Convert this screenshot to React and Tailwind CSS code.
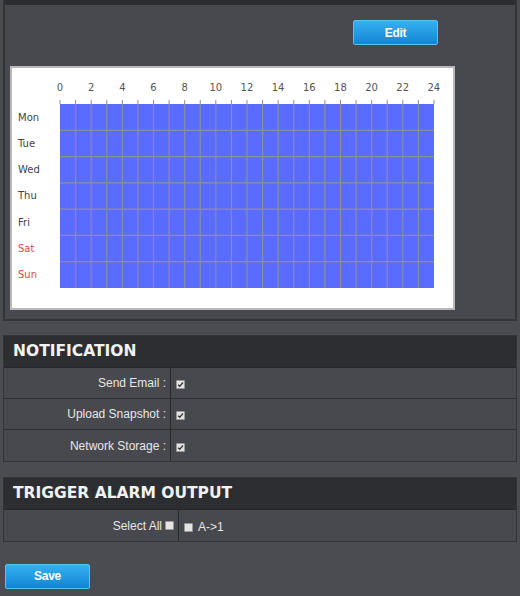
import React from "react";

const days = [
  { name: "Mon", red: false },
  { name: "Tue", red: false },
  { name: "Wed", red: false },
  { name: "Thu", red: false },
  { name: "Fri", red: false },
  { name: "Sat", red: true },
  { name: "Sun", red: true },
];

const hourLabels = [0, 2, 4, 6, 8, 10, 12, 14, 16, 18, 20, 22, 24];

const GRID_W = 374;
const GRID_H = 184;
const TICK_H = 4;

function CheckBox({ checked }) {
  return (
    <span className="inline-flex h-[9px] w-[9px] items-center justify-center rounded-[1px] border border-[#9a9a9a] bg-[#e4e4e4]">
      {checked && (
        <svg viewBox="0 0 8 8" className="h-[7px] w-[7px]">
          <path d="M1.2 4.2 L3.2 6 L6.8 1.8" fill="none" stroke="#3a3a3a" strokeWidth="1.6" />
        </svg>
      )}
    </span>
  );
}

function BlueButton({ children }) {
  return (
    <button className="h-[25px] w-[85px] rounded-[2px] border border-[#5cc0f2] bg-gradient-to-b from-[#35b0f2] to-[#0f86d4] text-[12px] font-bold tracking-tight text-white [font-family:'Liberation_Sans',sans-serif]">
      {children}
    </button>
  );
}

// the week grid is a drawing: blue fill, hour/day lines and tick marks on top
function WeekGrid() {
  const colW = GRID_W / 24;
  const rowH = GRID_H / 7;
  return (
    <svg width={GRID_W + 2} height={GRID_H + TICK_H} className="block">
      <rect x="1" y={TICK_H} width={GRID_W} height={GRID_H} fill="#5a6cfd" />
      {Array.from({ length: 25 }).map((_, i) => (
        <line
          key={"t" + i}
          x1={1 + i * colW}
          x2={1 + i * colW}
          y1="0"
          y2={TICK_H}
          stroke="#8a8a8a"
          strokeWidth="1"
        />
      ))}
      {Array.from({ length: 23 }).map((_, i) => (
        <line
          key={"v" + i}
          x1={1 + (i + 1) * colW}
          x2={1 + (i + 1) * colW}
          y1={TICK_H}
          y2={TICK_H + GRID_H}
          stroke="#8f8f98"
          strokeWidth="1.1"
        />
      ))}
      {Array.from({ length: 6 }).map((_, i) => (
        <line
          key={"h" + i}
          x1="1"
          x2={1 + GRID_W}
          y1={TICK_H + (i + 1) * rowH}
          y2={TICK_H + (i + 1) * rowH}
          stroke="#8f8f98"
          strokeWidth="1.2"
        />
      ))}
    </svg>
  );
}

function Schedule() {
  return (
    <div className="ml-[5px] w-[445px] border-2 border-[#b9b9b9] bg-white pb-[20px] pt-[14px]">
      <div className="ml-[48px] w-[374px]">
        <div className="-ml-[10px] flex w-[394px] justify-between text-[10px] text-[#555] [font-family:'DejaVu_Sans',sans-serif]">
          {hourLabels.map((h) => (
            <span key={h} className="w-5 text-center leading-[12px]">{h}</span>
          ))}
        </div>
      </div>
      <div className="mt-[6px] flex">
        <div className="mt-[4px] grid h-[184px] w-[47px] grid-rows-7 pl-[6px] text-[10px] [font-family:'DejaVu_Sans',sans-serif]">
          {days.map((d) => (
            <span key={d.name} className={`flex items-center ${d.red ? "text-[#e8443c]" : "text-[#444]"}`}>
              {d.name}
            </span>
          ))}
        </div>
        <WeekGrid />
      </div>
    </div>
  );
}

function SectionHeader({ title }) {
  return (
    <div className="flex h-[32px] items-center border-b border-[#26272a] bg-[#2d2e32] pl-[9px] text-[15.5px] font-bold text-[#f2f2f2] [font-family:'DejaVu_Sans',sans-serif]">
      {title}
    </div>
  );
}

function FieldRow({ label, labelWidth, children, last }) {
  return (
    <div className={`flex h-[31px] ${last ? "" : "border-b border-[#2e2f33]"}`}>
      <div
        className={`flex items-center justify-end border-r border-[#2a2b2e] pr-[4px] text-[12px] text-[#e6e6e6] [font-family:'Liberation_Sans',sans-serif] ${labelWidth}`}
      >
        {label}
      </div>
      <div className="flex items-center gap-[5px] pl-[5px] pt-[3px] text-[12px] text-[#e6e6e6] [font-family:'Liberation_Sans',sans-serif]">
        {children}
      </div>
    </div>
  );
}

export default function App() {
  return (
    <div className="h-[596px] w-[520px] overflow-hidden bg-[#4b4c51] px-[3px]">
      {/* schedule box */}
      <div className="h-[321px] border-x-2 border-b-2 border-[#333438] bg-[#48494e]">
        <div className="h-[5px] bg-[#2c2d31]" />
        <div className="flex justify-end pr-[77px] pt-[15px]">
          <BlueButton>Edit</BlueButton>
        </div>
        <div className="pt-[21px]">
          <Schedule />
        </div>
      </div>

      {/* notification */}
      <div className="mt-[14px] border border-[#333438] bg-[#48494e]">
        <SectionHeader title="NOTIFICATION" />
        <FieldRow label="Send Email :" labelWidth="w-[167px]">
          <CheckBox checked />
        </FieldRow>
        <FieldRow label="Upload Snapshot :" labelWidth="w-[167px]">
          <CheckBox checked />
        </FieldRow>
        <FieldRow label="Network Storage :" labelWidth="w-[167px]" last>
          <CheckBox checked />
        </FieldRow>
      </div>

      {/* trigger alarm output */}
      <div className="mt-[15px] border border-[#333438] bg-[#48494e]">
        <SectionHeader title="TRIGGER ALARM OUTPUT" />
        <FieldRow
          label={
            <span className="flex items-center gap-[3px]">
              Select All <CheckBox />
            </span>
          }
          labelWidth="w-[175px]"
          last
        >
          <CheckBox />
          <span>A-&gt;1</span>
        </FieldRow>
      </div>

      <div className="ml-[2px] mt-[20px]">
        <BlueButton>Save</BlueButton>
      </div>
    </div>
  );
}
